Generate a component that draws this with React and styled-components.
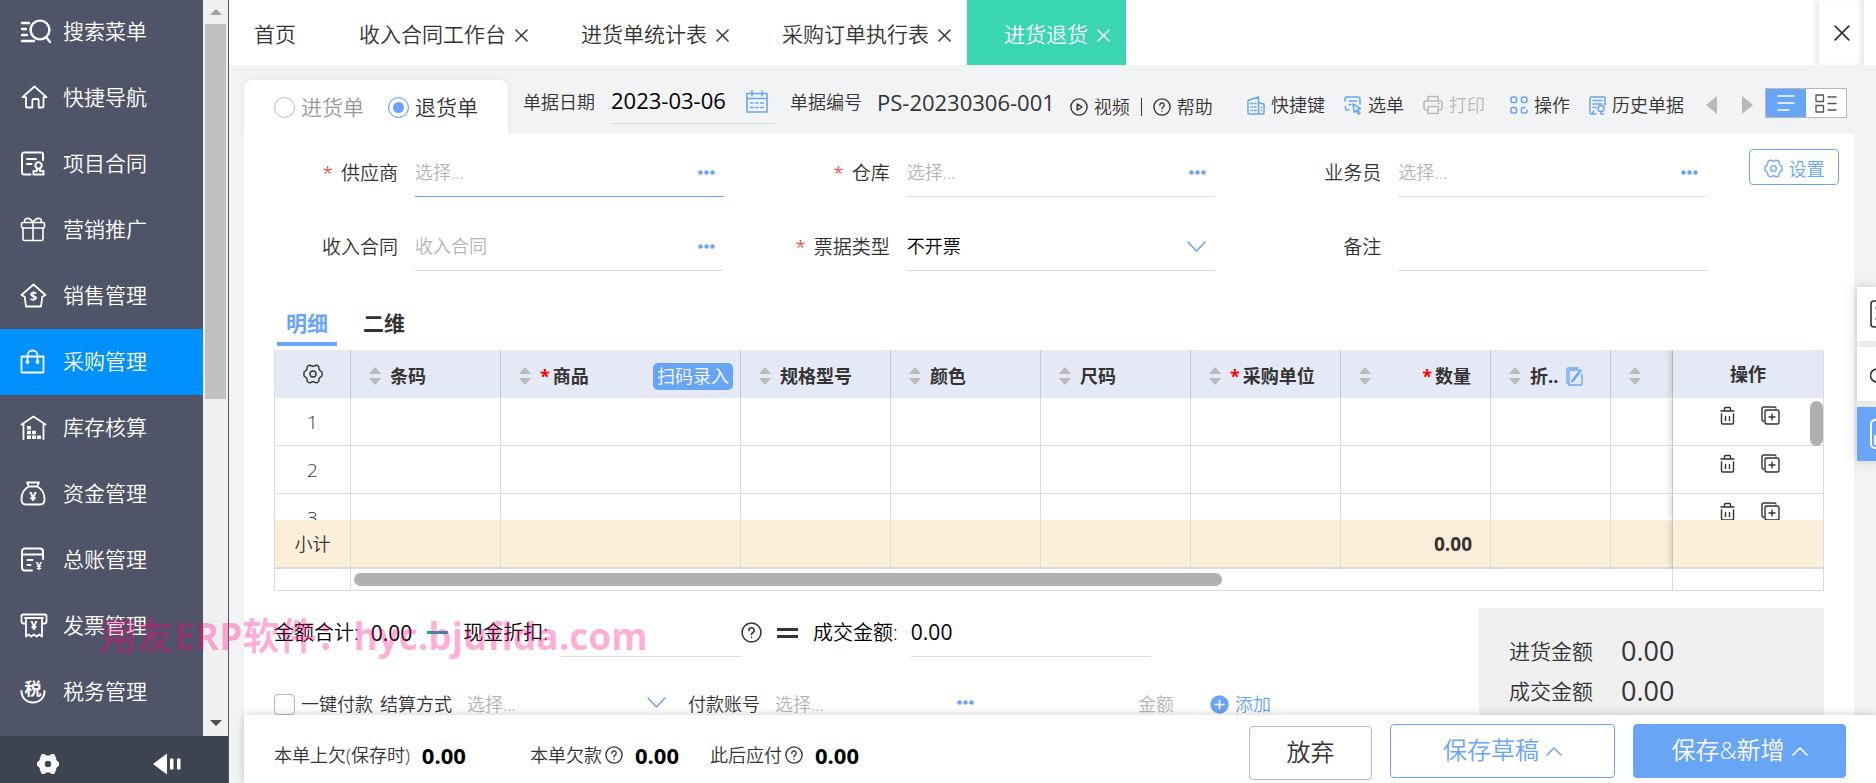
import React, { useState } from "react";
import styled, { createGlobalStyle, css } from "styled-components";

const FONT = `"Open Sans", "Noto Sans CJK SC", sans-serif`;
const BLUE = "#68a5f7";
const LINE = "#dcdcdc";

/* ---------- icons ---------- */

const Svg = ({ w = 24, h = 24, box = "0 0 24 24", sw = 1.6, children }) => (
	<svg
		width={w}
		height={h}
		viewBox={box}
		fill="none"
		stroke="currentColor"
		strokeWidth={sw}
		strokeLinecap="round"
		strokeLinejoin="round"
		aria-hidden="true"
	>
		{children}
	</svg>
);

const Glyph = ({ x, y, size, children }) => (
	<text
		x={x}
		y={y}
		fontSize={size}
		fontWeight="700"
		fontFamily='"Open Sans", "Noto Sans CJK SC", sans-serif'
		textAnchor="middle"
		fill="currentColor"
		stroke="none"
	>
		{children}
	</text>
);

const SearchMenuIcon = () => (
	<Svg w={31} h={25} box="0 0 31 25" sw={2.4}>
		<circle cx="20" cy="11" r="9.4" />
		<path d="M26 18l4 5M2 4h7M2 10h4M2 16h5M2 22h12" />
	</Svg>
);

const HomeIcon = () => (
	<Svg w={28} h={24} box="0 0 28 24" sw={1.8}>
		<path d="M2.5 12.2L14.5 1.5l12 10.7h-3v9.3a1 1 0 0 1-1 1h-3.800v-7a1.500 1.500 0 0 0-1.500-1.500h-3.400a1.500 1.500 0 0 0-1.500 1.500v7H7a1 1 0 0 1-1-1v-9.300z" />
	</Svg>
);

const ContractIcon = () => (
	<Svg w={25} h={25} box="0 0 25 25" sw={2}>
		<path d="M10.500 23.500H4a2 2 0 0 1-2-2V3.500a2 2 0 0 1 2-2h17a2 2 0 0 1 2 2V9M7 8h9M7 13h4.500" />
		<circle cx="18.500" cy="14.500" r="3.200" />
		<path d="M17 17.500v2.500h-3.500v3.500h10V20H20v-2.500" />
	</Svg>
);

const GiftIcon = () => (
	<Svg w={26} h={25} box="0 0 26 25" sw={1.6}>
		<rect x="1.500" y="5.500" width="23" height="5.500" rx="1.500" />
		<path d="M3 11v11a1.500 1.500 0 0 0 1.500 1.500h17A1.500 1.500 0 0 0 23 22V11M13 5.500v18" />
		<path d="M13 5.500C11 2 8.500 1 6.500 1.500S4 4 5.500 5.500M13 5.500C15 2 17.500 1 19.500 1.500S22 4 20.500 5.500" />
	</Svg>
);

const SalesIcon = () => (
	<Svg w={27} h={25} box="0 0 27 25" sw={1.8}>
		<path d="M1.500 12L13.500 1.500l12 10.500-3.200 1.800-1.300 9.700H6l-1.300-9.700z" />
		<Glyph x={13.5} y={18} size={13}>$</Glyph>
	</Svg>
);

const BagIcon = () => (
	<Svg w={25} h={25} box="0 0 25 25" sw={1.8}>
		<rect x="1.500" y="7.500" width="22" height="16" rx="0.500" />
		<path d="M7.500 13V6.500a5 5 0 0 1 10 0V13" />
		<circle cx="7.500" cy="13" r="1" fill="currentColor" />
		<circle cx="17.500" cy="13" r="1" fill="currentColor" />
	</Svg>
);

const StockIcon = () => (
	<Svg w={27} h={25} box="0 0 27 25" sw={1.8}>
		<path d="M1.500 9.500L13.500 1.500l12 8M3.500 9v15M23.500 9v15" />
		<path
			strokeWidth="0"
			fill="currentColor"
			d="M7 11h4v3.500H7zM7 15.700h4v3.500H7zM12 15.700h4v3.500h-4zM7 20.500h4V24H7zM12 20.500h4V24h-4zM17 20.500h4V24h-4z"
		/>
	</Svg>
);

const MoneyIcon = () => (
	<Svg w={26} h={25} box="0 0 26 25" sw={1.8}>
		<path d="M7 1.500h12l-1.800 4H8.800zM8.800 5.500C4 8 1.500 13 1.500 18c0 3.500 1.500 5.500 4 5.500h15c2.500 0 4-2 4-5.500 0-5-2.500-10-7.300-12.500" />
		<Glyph x={13} y={20} size={13}>¥</Glyph>
	</Svg>
);

const LedgerIcon = () => (
	<Svg w={25} h={25} box="0 0 25 25" sw={2}>
		<path d="M12 23.500H5a3 3 0 0 1-3-3v-16a3 3 0 0 1 3-3h15a3 3 0 0 1 3 3V12M2 7.500h21M7.500 13h5M7.500 18h3" />
		<Glyph x={19} y={23} size={11}>¥</Glyph>
	</Svg>
);

const InvoiceIcon = () => (
	<Svg w={28} h={25} box="0 0 28 25" sw={1.8}>
		<path d="M5 10.500H3.500A2 2 0 0 1 1.500 8.500V3a1.500 1.500 0 0 1 1.500-1.500h22A1.500 1.500 0 0 1 26.500 3v5.500a2 2 0 0 1-2 2H23M5 5h18M6 5v18.500l2.700-2 2.600 2 2.700-2 2.700 2 2.600-2 2.700 2V5" />
		<Glyph x={14} y={17} size={12}>¥</Glyph>
	</Svg>
);

const TaxIcon = () => (
	<Svg w={26} h={26} box="0 0 26 26" sw={2}>
		<Glyph x={13} y={17} size={17}>税</Glyph>
		<path d="M1.500 13c0 7 5 11.500 11.500 11.500S24.500 20 24.500 13" />
	</Svg>
);

const SolidGearIcon = () => (
	<svg width="22" height="22" viewBox="0 0 22 22" aria-hidden="true">
		<path
			fill="currentColor"
			fillRule="evenodd"
			stroke="currentColor"
			strokeLinejoin="round"
			d="M5 1.500h2.500L9.500 3h3l2-1.500H17L18.500 5l.5 2.500 2.500 2v3l-2.500 2-.5 2.500-1.500 3.500h-2.500l-2-1.500h-3l-2 1.500H5L3.500 17 3 14.500l-2.500-2v-3l2.500-2L3.500 5zM11 7.200a3.800 3.800 0 1 0 0 7.600 3.800 3.800 0 0 0 0-7.600z"
		/>
	</svg>
);

const CollapseIcon = () => (
	<svg width="28" height="22" viewBox="0 0 28 22" fill="currentColor" aria-hidden="true">
		<path d="M0 11L14 .5v21zM17 5.500h3.500v11H17zM24 5.500h3.500v11H24z" />
	</svg>
);

const CrossIcon = ({ size = 13 }) => (
	<Svg w={size} h={size} box="0 0 14 14" sw={1.5}>
		<path d="M1 1l12 12M13 1L1 13" />
	</Svg>
);

const CalendarIcon = () => (
	<Svg w={22} h={23} box="0 0 22 23" sw={1.6}>
		<path d="M1 3.500h20V22H1zM1 8.500h20M6 .8v5M16 .8v5" />
		<path d="M4.500 13h13M4.500 17.500h13" strokeDasharray="2.5 2.6" />
	</Svg>
);

const PlayIcon = () => (
	<Svg w={18} h={18} box="0 0 20 20" sw={1.5}>
		<circle cx="10" cy="10" r="9" />
		<path d="M8 6.500v7l5.500-3.500z" />
	</Svg>
);

const HelpIcon = ({ size = 18 }) => (
	<Svg w={size} h={size} box="0 0 20 20" sw={1.5}>
		<circle cx="10" cy="10" r="9" />
		<path d="M7.500 8a2.500 2.500 0 1 1 3.700 2.200c-.8.4-1.200.9-1.200 1.800M10 14.500v.3" />
	</Svg>
);

const BuildingIcon = () => (
	<Svg w={18} h={19} box="0 0 18 19" sw={1.5}>
		<path d="M1 17V4.500L11.500 1v17H2a1 1 0 0 1-1-1zM11.500 6.500l5.500 1.700V17a1 1 0 0 1-1 1h-4.500" />
		<path d="M4 7.500h5M4 11h5M4 14.500h5M14 11.500h.5M14 14.500h.5" strokeDasharray="1.5 2" />
	</Svg>
);

const PickIcon = () => (
	<Svg w={18} h={19} box="0 0 18 19" sw={1.5}>
		<path d="M5 14H3.500A2 2 0 0 1 1.500 12v-1.500M1 5V3a2 2 0 0 1 2-2h11a2 2 0 0 1 2 2v5M5 5h8M5 8.500h2" />
		<path d="M9 8l1.200 8.500 1.900-2 2.400 3.700 1.500-1-2.300-3.600 2.800-.9z" />
	</Svg>
);

const PrintIcon = () => (
	<Svg w={20} h={20} box="0 0 20 20" sw={1.6}>
		<path d="M5 6V1.500h10V6M5 15H3a2 2 0 0 1-2-2V8a2 2 0 0 1 2-2h14a2 2 0 0 1 2 2v5a2 2 0 0 1-2 2h-2M5 11.500h10v7H5zM15 8.500h1" />
	</Svg>
);

const GridIcon = () => (
	<Svg w={18} h={18} box="0 0 18 18" sw={1.6}>
		<rect x="1" y="1" width="5.500" height="5.500" rx="1.500" />
		<rect x="11.500" y="1" width="5.500" height="5.500" rx="2" />
		<rect x="1" y="11.500" width="5.500" height="5.500" rx="1.500" />
		<path d="M17 14v1.500a1.500 1.500 0 0 1-1.500 1.500H13a1.500 1.500 0 0 1-1.500-1.500V13a1.500 1.500 0 0 1 1.500-1.500h2" />
	</Svg>
);

const HistoryIcon = () => (
	<Svg w={17} h={19} box="0 0 17 19" sw={1.5}>
		<path d="M7 18H2a1 1 0 0 1-1-1V2a1 1 0 0 1 1-1h13a1 1 0 0 1 1 1v7M4 4.500h9M4 8h9M4 11.500h3M3 18l1.500-3" />
		<circle cx="12" cy="12.500" r="3" />
		<path d="M12 15.500V18h2.500" />
	</Svg>
);

const GearIcon = ({ size = 19 }) => (
	<Svg w={size} h={size} box="0 0 20 20" sw={1.4}>
		<path d="M5.500 1.500l2-.3L9 2.300h2l1.500-1.100 2 .3 1.200 1 .3 2.500 1 1.500 2 1.500v4l-2 1.500-1 1.500-.3 2.500-1.200 1-2 .3-1.500-1.100H9l-1.500 1.100-2-.3-1.200-1L4 15l-1-1.500L1 12V8l2-1.500L4 5l.3-2.500z" />
		<circle cx="10" cy="10" r="3" />
	</Svg>
);

const DotsIcon = () => (
	<svg width="17" height="5" viewBox="0 0 17 5" fill="currentColor" aria-hidden="true">
		<circle cx="2.500" cy="2.500" r="2.200" />
		<circle cx="8.500" cy="2.500" r="2.200" />
		<circle cx="14.500" cy="2.500" r="2.200" />
	</svg>
);

const DownIcon = () => (
	<Svg w={19} h={11} box="0 0 19 11" sw={1.5}>
		<path d="M1 1l8.500 9L18 1" />
	</Svg>
);

const UpIcon = () => (
	<Svg w={16} h={9} box="0 0 16 9" sw={1.6}>
		<path d="M1 8l7-7 7 7" />
	</Svg>
);

const SortIcon = () => (
	<svg width="12" height="18" viewBox="0 0 12 18" fill="#b9b9b9" aria-hidden="true">
		<path d="M6 0l6 7H0zM6 18l6-7H0z" />
	</svg>
);

const EditIcon = () => (
	<Svg w={17} h={19} box="0 0 17 19" sw={1.3}>
		<path d="M12 1H2a1 1 0 0 0-1 1v14l2 2h12a1 1 0 0 0 1-1V7M3 17V3h9" />
		<path d="M14.500 3.500l-8 10.500" strokeWidth="2.4" />
	</Svg>
);

const TrashIcon = () => (
	<Svg w={15} h={19} box="0 0 15 19" sw={1.4}>
		<path d="M1 5h13M4.500 5V2.500a1 1 0 0 1 1-1h4a1 1 0 0 1 1 1V5M1.500 8v9a1 1 0 0 0 1 1h10a1 1 0 0 0 1-1V8M5.500 10.500v4M9.500 10.500v4" />
	</Svg>
);

const CopyPlusIcon = () => (
	<Svg w={19} h={19} box="0 0 19 19" sw={1.4}>
		<rect x="4" y="4" width="14" height="14" rx="2" />
		<path d="M2.500 15.500A2 2 0 0 1 1 13.500V3a2 2 0 0 1 2-2h10.500a2 2 0 0 1 1.500 1M11 8v6M8 11h6" />
	</Svg>
);

const AddIcon = () => (
	<svg width="19" height="19" viewBox="0 0 19 19" aria-hidden="true">
		<circle cx="9.500" cy="9.500" r="9.200" fill={BLUE} />
		<path d="M9.500 4.500v10M4.500 9.500h10" stroke="#fff" strokeWidth="1.6" />
	</svg>
);

const Triangle = ({ left }) => (
	<svg width="11" height="18" viewBox="0 0 11 18" fill="#b9b9b9" aria-hidden="true">
		<path d={left ? "M11 0v18L0 9z" : "M0 0v18l11-9z"} />
	</svg>
);

const ListViewIcon = () => (
	<Svg w={18} h={16} box="0 0 18 16" sw={1.5}>
		<path d="M1 1h16M1 8h16M1 15h11" />
	</Svg>
);

const CardViewIcon = () => (
	<Svg w={22} h={19} box="0 0 22 19" sw={1.3}>
		<path d="M1 1h7.500v6.500H1zM1 11.500h7.500V18H1zM13 3h8M13 9.500h8M13 16h8" />
	</Svg>
);

/* ---------- data ---------- */

const menus = [
	{ name: "搜索菜单", icon: <SearchMenuIcon /> },
	{ name: "快捷导航", icon: <HomeIcon /> },
	{ name: "项目合同", icon: <ContractIcon /> },
	{ name: "营销推广", icon: <GiftIcon /> },
	{ name: "销售管理", icon: <SalesIcon /> },
	{ name: "采购管理", icon: <BagIcon />, active: true },
	{ name: "库存核算", icon: <StockIcon /> },
	{ name: "资金管理", icon: <MoneyIcon /> },
	{ name: "总账管理", icon: <LedgerIcon /> },
	{ name: "发票管理", icon: <InvoiceIcon /> },
	{ name: "税务管理", icon: <TaxIcon /> },
];

const pageTabs = ["收入合同工作台", "进货单统计表", "采购订单执行表", "进货退货"];

const columns = [
	{ name: "条码", width: 150 },
	{ name: "商品", width: 240, required: true, scan: true },
	{ name: "规格型号", width: 150 },
	{ name: "颜色", width: 150 },
	{ name: "尺码", width: 150 },
	{ name: "采购单位", width: 150, required: true },
	{ name: "数量", width: 150, required: true, right: true, sum: "0.00" },
	{ name: "折..", width: 120, edit: true },
	{ name: "" },
];

/* ---------- parts ---------- */

const Sidebar = () => (
	<Side>
		<MenuArea>
			<MenuList>
				{menus.map((m) => (
					<MenuLink href="#" key={m.name} $active={m.active}>
						<MenuIcon>{m.icon}</MenuIcon>
						{m.name}
					</MenuLink>
				))}
			</MenuList>
			<ScrollTrack>
				<ScrollArrow viewBox="0 0 12 6" $color="#a3a3a3">
					<path d="M6 0l6 6H0z" />
				</ScrollArrow>
				<ScrollThumb />
				<ScrollArrow viewBox="0 0 12 6" $color="#505050">
					<path d="M0 0h12L6 6z" />
				</ScrollArrow>
			</ScrollTrack>
		</MenuArea>
		<SideFooter>
			<PlainBtn aria-label="系统设置">
				<SolidGearIcon />
			</PlainBtn>
			<PlainBtn aria-label="收起菜单">
				<CollapseIcon />
			</PlainBtn>
		</SideFooter>
	</Side>
);

const PageTabs = () => (
	<TabBar>
		<HomeTab href="#">首页</HomeTab>
		{pageTabs.map((t) => (
			<PageTab key={t} $active={t === "进货退货"}>
				<a href="#">{t}</a>
				<PlainBtn aria-label={`关闭${t}`}>
					<CrossIcon />
				</PlainBtn>
			</PageTab>
		))}
		<CloseAll aria-label="关闭全部">
			<CrossIcon size={16} />
		</CloseAll>
	</TabBar>
);

const Toolbar = () => {
	const [kind, setKind] = useState("return");
	return (
		<ToolRow>
			<KindCard>
				<KindLabel $on={kind === "in"}>
					<input
						type="radio"
						name="kind"
						checked={kind === "in"}
						onChange={() => setKind("in")}
					/>
					进货单
				</KindLabel>
				<KindLabel $on={kind === "return"}>
					<input
						type="radio"
						name="kind"
						checked={kind === "return"}
						onChange={() => setKind("return")}
					/>
					退货单
				</KindLabel>
			</KindCard>
			<DocInfo>
				<label htmlFor="billDate">单据日期</label>
				<DateBox>
					<input id="billDate" defaultValue="2023-03-06" />
					<CalendarIcon />
				</DateBox>
				<span>单据编号</span>
				<DocNo>PS-20230306-001</DocNo>
			</DocInfo>
			<HelpLinks>
				<a href="#">
					<PlayIcon />
					视频
				</a>
				<i />
				<a href="#">
					<HelpIcon />
					帮助
				</a>
			</HelpLinks>
			<Actions>
				<ActionBtn>
					<BuildingIcon />
					快捷键
				</ActionBtn>
				<ActionBtn>
					<PickIcon />
					选单
				</ActionBtn>
				<ActionBtn disabled>
					<PrintIcon />
					打印
				</ActionBtn>
				<ActionBtn>
					<GridIcon />
					操作
				</ActionBtn>
				<ActionBtn>
					<HistoryIcon />
					历史单据
				</ActionBtn>
			</Actions>
			<Pager>
				<PlainBtn aria-label="上一单">
					<Triangle left />
				</PlainBtn>
				<PlainBtn aria-label="下一单">
					<Triangle />
				</PlainBtn>
			</Pager>
			<ViewToggle>
				<ViewBtn $active aria-label="列表视图">
					<ListViewIcon />
				</ViewBtn>
				<ViewBtn aria-label="卡片视图">
					<CardViewIcon />
				</ViewBtn>
			</ViewToggle>
		</ToolRow>
	);
};

const Field = ({ id, label, required, focus, type = "pick", placeholder }) => (
	<FieldRow>
		<FieldLabel htmlFor={id}>
			{required && <Star>*</Star>}
			{label}
		</FieldLabel>
		<FieldBox $focus={focus}>
			{type === "select" ? (
				<select id={id} defaultValue="none">
					<option value="none">不开票</option>
				</select>
			) : (
				<input id={id} placeholder={placeholder} />
			)}
			{type === "pick" && (
				<PickBtn aria-label={`选择${label}`}>
					<DotsIcon />
				</PickBtn>
			)}
			{type === "select" && <DownIcon />}
		</FieldBox>
	</FieldRow>
);

const DetailTable = () => (
	<TableBox>
		<Table>
			<colgroup>
				<col width="76" />
				{columns.map((c) => (
					<col key={c.name} width={c.width} />
				))}
				<col width="150" />
			</colgroup>
			<thead>
				<tr>
					<NumHead>
						<PlainBtn aria-label="列设置">
							<GearIcon size={20} />
						</PlainBtn>
					</NumHead>
					{columns.map((c) => (
						<th key={c.name}>
							<HeadCell>
								<SortIcon />
								<HeadText $right={c.right}>
									{c.required && <Star $tight>*</Star>}
									{c.name}
								</HeadText>
								{c.scan && <ScanBtn>扫码录入</ScanBtn>}
								{c.edit && (
									<EditBtn aria-label="批量修改折扣">
										<EditIcon />
									</EditBtn>
								)}
							</HeadCell>
						</th>
					))}
					<OpHead>操作</OpHead>
				</tr>
			</thead>
			<tbody>
				{[1, 2, 3].map((n) => (
					<tr key={n}>
						<td>
							<RowNo $cut={n === 3}>{n}</RowNo>
						</td>
						{columns.map((c) => (
							<td key={c.name} />
						))}
						<OpCell>
							<OpIcons $cut={n === 3}>
								<PlainBtn aria-label="删除行">
									<TrashIcon />
								</PlainBtn>
								<PlainBtn aria-label="复制行">
									<CopyPlusIcon />
								</PlainBtn>
							</OpIcons>
						</OpCell>
					</tr>
				))}
			</tbody>
			<tfoot>
				<tr>
					<td>小计</td>
					{columns.map((c) => (
						<SumCell key={c.name}>{c.sum}</SumCell>
					))}
					<OpCell />
				</tr>
			</tfoot>
		</Table>
		<RowThumb />
		<ScrollRow>
			<i />
			<div>
				<ColThumb />
			</div>
			<i />
		</ScrollRow>
	</TableBox>
);

const Totals = () => (
	<Bottom>
		<div>
			<SumRow>
				<span>金额合计:</span>
				<b>0.00</b>
				<Minus />
				<label htmlFor="cashOff">现金折扣:</label>
				<SumInput id="cashOff" $width={180} />
				<HelpIcon size={21} />
				<Equal />
				<label htmlFor="deal">成交金额:</label>
				<SumInput id="deal" $width={240} defaultValue="0.00" />
			</SumRow>
			<PayRow>
				<Tick>
					<input type="checkbox" />
					一键付款
				</Tick>
				<label htmlFor="payWay">结算方式</label>
				<PayBox>
					<select id="payWay" defaultValue="">
						<option value="">选择...</option>
					</select>
					<DownIcon />
				</PayBox>
				<label htmlFor="payAcc">付款账号</label>
				<PayBox>
					<input id="payAcc" placeholder="选择..." />
					<PickBtn aria-label="选择付款账号">
						<DotsIcon />
					</PickBtn>
				</PayBox>
				<PayAmount aria-label="金额" placeholder="金额" />
				<AddBtn>
					<AddIcon />
					添加
				</AddBtn>
			</PayRow>
		</div>
		<Summary>
			<div>
				<dt>进货金额</dt>
				<dd>0.00</dd>
			</div>
			<div>
				<dt>成交金额</dt>
				<dd>0.00</dd>
			</div>
		</Summary>
	</Bottom>
);

const Footer = () => (
	<FootBar>
		<Owe>
			本单上欠(保存时)<b>0.00</b>
		</Owe>
		<Owe>
			本单欠款
			<HelpIcon />
			<b>0.00</b>
		</Owe>
		<Owe>
			此后应付
			<HelpIcon />
			<b>0.00</b>
		</Owe>
		<FootBtns>
			<FootBtn $width={123}>放弃</FootBtn>
			<FootBtn $width={225} $kind="outline">
				保存草稿
				<UpIcon />
			</FootBtn>
			<FootBtn $width={213} $kind="primary">
				保存&新增
				<UpIcon />
			</FootBtn>
		</FootBtns>
	</FootBar>
);

const App = () => (
	<>
		<GlobalStyle />
		<Page>
			<Sidebar />
			<Main>
				<PageTabs />
				<Toolbar />
				<Card>
					<FormArea>
						<FieldGrid>
							<Field id="supplier" label="供应商" required focus placeholder="选择..." />
							<Field id="store" label="仓库" required placeholder="选择..." />
							<Field id="staff" label="业务员" placeholder="选择..." />
							<Field id="contract" label="收入合同" placeholder="收入合同" />
							<Field id="invoice" label="票据类型" required type="select" />
							<Field id="memo" label="备注" type="text" />
						</FieldGrid>
						<SetBtn>
							<GearIcon />
							设置
						</SetBtn>
					</FormArea>
					<DetailTabs>
						<DetailTab $active>明细</DetailTab>
						<DetailTab>二维</DetailTab>
					</DetailTabs>
					<DetailTable />
					<Totals />
				</Card>
				<Footer />
			</Main>
			<FloatTools>
				<FloatBtn aria-label="便签">
					<Svg w={26} h={28} box="0 0 26 28">
						<rect x="1" y="1" width="24" height="26" rx="3" />
						<path d="M6 8h14M6 19h14" />
					</Svg>
				</FloatBtn>
				<FloatBtn aria-label="客服">
					<Svg w={26} h={28} box="0 0 26 28">
						<path d="M7 22a6 6 0 0 1 0-13 8 8 0 0 1 15 3" />
					</Svg>
				</FloatBtn>
				<FloatBtn $active aria-label="报表">
					<Svg w={28} h={30} box="0 0 28 30" sw={2}>
						<rect x="1" y="1" width="26" height="28" rx="4" />
						<path d="M5 17v8h16M8 21l4-5" />
					</Svg>
				</FloatBtn>
			</FloatTools>
			<Watermark>用友ERP软件：hyc.bjufida.com</Watermark>
		</Page>
	</>
);

export default App;

/* ---------- styles ---------- */

const GlobalStyle = createGlobalStyle`
	* {
		box-sizing: border-box;
	}
	body {
		margin: 0;
		font-family: ${FONT};
		font-size: 18px;
		font-weight: 350;
		line-height: 24px;
		color: #333;
	}
	button, input, select {
		font: inherit;
		color: inherit;
		margin: 0;
	}
	input, select {
		border: none;
		background: transparent;
		outline: none;
		padding: 0;
		min-width: 0;
	}
	select {
		appearance: none;
	}
	input::placeholder {
		color: #b5b5b5;
		opacity: 1;
	}
	button {
		cursor: pointer;
	}
	a {
		color: inherit;
		text-decoration: none;
	}
	svg {
		display: block;
		flex: none;
	}
`;

const Page = styled.div`
	position: relative;
	display: flex;
	height: 100vh;
	overflow: hidden;
	background: #f2f3f5;
`;

const PlainBtn = styled.button`
	display: flex;
	align-items: center;
	border: none;
	background: none;
	padding: 0;
`;

const Side = styled.nav`
	width: 229px;
	flex: none;
	display: flex;
	flex-direction: column;
	background: #4f5468;
	border-right: 1px solid #4f5468;
	color: #fff;
`;

const MenuArea = styled.div`
	flex: 1;
	min-height: 0;
	display: flex;
`;

const MenuList = styled.div`
	flex: 1;
	display: flex;
	flex-direction: column;
	margin-top: -1px;
	overflow: hidden;
`;

const MenuLink = styled.a`
	height: 66px;
	flex: none;
	display: flex;
	align-items: center;
	padding: 0 0 2px 20px;
	font-size: 21px;
	background: ${(p) => (p.$active ? "#0091ff" : "transparent")};
`;

const MenuIcon = styled.span`
	width: 43px;
`;

const ScrollTrack = styled.div`
	width: 25px;
	display: flex;
	flex-direction: column;
	align-items: center;
	padding: 9px 0 10px;
	background: #f0f0f0;
`;

const ScrollArrow = styled.svg`
	width: 12px;
	height: 6px;
	fill: ${(p) => p.$color};
`;

const ScrollThumb = styled.div`
	width: 21px;
	height: 375px;
	margin: 9px 0 auto;
	background: #c1c1c1;
`;

const SideFooter = styled.div`
	height: 47px;
	display: flex;
	align-items: center;
	justify-content: space-between;
	padding: 8px 47px 0 37px;
	background: #3e4350;
`;

const Main = styled.div`
	flex: 1;
	min-width: 0;
	display: flex;
	flex-direction: column;
`;

const TabBar = styled.div`
	height: 65px;
	flex: none;
	display: flex;
	padding-right: 12px;
	background: #fff;
	font-size: 21px;
`;

const HomeTab = styled.a`
	display: flex;
	align-items: center;
	padding: 3px 26px 0 25px;
`;

const PageTab = styled.div`
	display: flex;
	align-items: center;
	gap: 9px;
	padding: 3px 16px 0 37px;
	color: ${(p) => (p.$active ? "#fff" : "#333")};
	background: ${(p) => (p.$active ? "#3ad6b3" : "transparent")};
	svg {
		margin-top: 3px;
	}
`;

const CloseAll = styled(PlainBtn)`
	width: 45px;
	margin-left: auto;
	justify-content: center;
	box-shadow: -3px 0 6px rgba(0, 0, 0, 0.1), inset -6px 0 6px -3px rgba(0, 0, 0, 0.1);
	clip-path: inset(0 0 0 -10px);
`;

const ToolRow = styled.div`
	height: 69px;
	flex: none;
	display: flex;
	align-items: flex-start;
	padding: 15px 29px 0 15px;
`;

const KindCard = styled.div`
	width: 264px;
	height: 54px;
	display: flex;
	align-items: center;
	gap: 24px;
	padding-left: 30px;
	border-radius: 8px 8px 0 0;
	background: #fff;
	box-shadow: 0 0 8px rgba(0, 0, 0, 0.06);
`;

const KindLabel = styled.label`
	display: flex;
	align-items: center;
	gap: 6px;
	font-size: 21px;
	color: ${(p) => (p.$on ? "#333" : "#999")};
	input {
		appearance: none;
		width: 21px;
		height: 21px;
		border: 1px solid ${(p) => (p.$on ? BLUE : "#bbb")};
		border-radius: 50%;
		background: ${(p) => (p.$on ? BLUE : "#fff")};
		box-shadow: inset 0 0 0 4px #fff;
	}
`;

const DocInfo = styled.div`
	display: flex;
	align-items: center;
	height: 44px;
	margin-left: 15px;
`;

const DateBox = styled.div`
	width: 164px;
	height: 44px;
	display: flex;
	align-items: center;
	justify-content: space-between;
	margin: 0 15px 0 16px;
	padding-right: 7px;
	border-bottom: 1px solid ${LINE};
	color: ${BLUE};
	input {
		width: 124px;
		padding-bottom: 3px;
		font-size: 22px;
		font-weight: 400;
		color: #000;
	}
`;

const DocNo = styled.span`
	margin-left: 15px;
	font-size: 22px;
	font-weight: 400;
`;

const HelpLinks = styled.div`
	display: flex;
	align-items: center;
	gap: 11px;
	height: 54px;
	margin-left: 15px;
	a {
		display: flex;
		align-items: center;
		gap: 6px;
	}
	i {
		width: 1px;
		height: 18px;
		background: #333;
	}
`;

const Actions = styled.div`
	display: flex;
	align-items: center;
	gap: 19px;
	height: 50px;
	margin-left: auto;
`;

const ActionBtn = styled.button`
	display: flex;
	align-items: center;
	gap: 6px;
	padding: 0;
	border: none;
	background: none;
	color: #333;
	svg {
		color: ${BLUE};
	}
	&:disabled {
		color: #b9b9b9;
		margin-right: 6px;
		svg {
			color: #b9b9b9;
		}
	}
`;

const Pager = styled.div`
	display: flex;
	align-items: center;
	gap: 25px;
	height: 50px;
	margin: 0 12px 0 22px;
`;

const ViewToggle = styled.div`
	display: flex;
	margin-top: 8px;
	border: 1px solid #b9b9b9;
	background: #fff;
`;

const ViewBtn = styled(PlainBtn)`
	width: 40px;
	height: 28px;
	justify-content: center;
	color: ${(p) => (p.$active ? "#fff" : "#555")};
	background: ${(p) => (p.$active ? BLUE : "#fff")};
`;

const Card = styled.div`
	flex: 1;
	min-height: 0;
	overflow: hidden;
	margin: 0 22px 0 15px;
	background: #fff;
`;

const FormArea = styled.div`
	display: flex;
	align-items: flex-start;
	justify-content: space-between;
	padding: 15px 15px 0 0;
`;

const FieldGrid = styled.div`
	flex: 1;
	display: grid;
	grid-template-columns: repeat(3, 1fr);
	row-gap: 26px;
	padding-right: 30px;
`;

const FieldRow = styled.div`
	display: flex;
	align-items: flex-end;
	gap: 17px;
	padding-right: 12px;
`;

const FieldLabel = styled.label`
	width: 154px;
	height: 36px;
	text-align: right;
	font-size: 19px;
`;

const Star = styled.span`
	margin-right: ${(p) => (p.$tight ? "3px" : "8px")};
	color: #f00;
`;

const FieldBox = styled.div`
	flex: 1;
	min-width: 0;
	height: 48px;
	display: flex;
	align-items: center;
	padding: 0 9px 1px 0;
	border-bottom: 1px solid ${(p) => (p.$focus ? BLUE : LINE)};
	color: ${BLUE};
	input,
	select {
		flex: 1;
		color: #000;
	}
`;

const PickBtn = styled(PlainBtn)`
	color: ${BLUE};
`;

const SetBtn = styled.button`
	width: 90px;
	height: 36px;
	display: flex;
	align-items: center;
	justify-content: center;
	gap: 6px;
	padding: 3px 0 0;
	border: 1px solid ${BLUE};
	border-radius: 4px;
	background: #fff;
	color: ${BLUE};
`;

const DetailTabs = styled.div`
	display: flex;
	gap: 17px;
	padding: 35px 33px 0;
`;

const DetailTab = styled.button`
	width: 60px;
	height: 40px;
	padding: 0 0 2px;
	border: none;
	border-bottom: 4px solid ${(p) => (p.$active ? BLUE : "transparent")};
	background: none;
	font-size: 21px;
	font-weight: 700;
	color: ${(p) => (p.$active ? BLUE : "#333")};
`;

const TableBox = styled.div`
	position: relative;
	margin: 4px 30px 0;
	border: 1px solid ${LINE};
	border-top: none;
`;

const Table = styled.table`
	width: 100%;
	table-layout: fixed;
	border-collapse: separate;
	border-spacing: 0;
	th,
	td {
		padding: 0;
		border-right: 1px solid ${LINE};
	}
	th:last-child,
	td:last-child {
		border-right: none;
	}
	th {
		height: 48px;
		background: #e5e9f5;
		border-color: #c8c8c8;
	}
	tbody td {
		border-bottom: 1px solid ${LINE};
	}
	tbody tr:last-child td {
		border-bottom: none;
	}
	tfoot td {
		height: 49px;
		text-align: center;
		background: #fcefda;
		border-bottom: 2px solid ${LINE};
	}
`;

const NumHead = styled.th`
	button {
		margin: 0 auto;
	}
`;

const HeadCell = styled.div`
	display: flex;
	align-items: center;
	padding: 4px 7px 0 18px;
`;

const HeadText = styled.span`
	margin-left: 9px;
	font-weight: 700;
	white-space: nowrap;
	${(p) =>
		p.$right &&
		css`
			margin-left: auto;
			margin-right: 12px;
		`}
`;

const ScanBtn = styled.button`
	height: 27px;
	margin-left: auto;
	padding: 0 4px;
	border: none;
	border-radius: 5px;
	background: ${BLUE};
	color: #fff;
	font-weight: 350;
`;

const EditBtn = styled(PlainBtn)`
	margin-left: 8px;
	color: ${BLUE};
`;

const opShadow = css`
	position: relative;
	box-shadow: -3px 0 6px rgba(0, 0, 0, 0.14);
	clip-path: inset(0 0 0 -9px);
`;

const OpHead = styled.th`
	${opShadow}
	font-weight: 700;
`;

const OpCell = styled.td`
	${opShadow}
`;

const RowNo = styled.div`
	height: ${(p) => (p.$cut ? "26px" : "47px")};
	padding-top: 12px;
	overflow: hidden;
	text-align: center;
	font-size: 19px;
`;

const OpIcons = styled.div`
	height: ${(p) => (p.$cut ? "26px" : "47px")};
	overflow: hidden;
	display: flex;
	align-items: flex-start;
	gap: 26px;
	padding: 8px 0 0 47px;
`;

const SumCell = styled.td`
	&& {
		padding-right: 18px;
		text-align: right;
		font-size: 19px;
		font-weight: 700;
	}
`;

const ScrollRow = styled.div`
	height: 21px;
	display: grid;
	grid-template-columns: 76px 1fr 150px;
	i,
	div {
		border-right: 1px solid ${LINE};
	}
	i:last-child {
		border: none;
	}
	div {
		padding: 4px 3px;
	}
`;

const ColThumb = styled.span`
	display: block;
	width: 66%;
	height: 13px;
	border-radius: 7px;
	background: #b0b0b0;
`;

const RowThumb = styled.span`
	position: absolute;
	top: 51px;
	right: 0;
	width: 13px;
	height: 45px;
	border-radius: 7px;
	background: #b0b0b0;
`;

const Bottom = styled.div`
	display: flex;
	justify-content: space-between;
	padding: 17px 30px 0;
`;

const SumRow = styled.div`
	height: 49px;
	display: flex;
	align-items: center;
	font-size: 20px;
	color: #000;
	svg {
		color: #333;
	}
	b {
		margin-left: 12px;
		font-size: 21px;
		font-weight: 400;
	}
`;

const Minus = styled.i`
	width: 21px;
	height: 3px;
	margin: 0 15px;
	background: #00b5ad;
`;

const Equal = styled.i`
	width: 21px;
	height: 10px;
	margin: 0 15px;
	border: solid #333;
	border-width: 3px 0;
`;

const SumInput = styled.input`
	width: ${(p) => p.$width}px;
	height: 49px;
	margin-left: 13px;
	border-bottom: 1px solid ${LINE};
	font-size: 21px;
	font-weight: 400;
`;

const PayRow = styled.div`
	height: 48px;
	display: flex;
	align-items: center;
	margin-top: 23px;
`;

const Tick = styled.label`
	display: flex;
	align-items: center;
	gap: 6px;
	margin-right: 7px;
	input {
		appearance: none;
		width: 21px;
		height: 21px;
		border: 1px solid #b5b5b5;
		border-radius: 4px;
	}
`;

const PayBox = styled.div`
	width: 199px;
	display: flex;
	align-items: center;
	margin: 0 22px 0 15px;
	color: ${BLUE};
	input,
	select {
		flex: 1;
		color: #b5b5b5;
	}
	svg {
		margin-bottom: 4px;
	}
`;

const PayAmount = styled.input`
	width: 100px;
	margin: 0 36px 0 78px;
	text-align: right;
`;

const AddBtn = styled(PlainBtn)`
	gap: 6px;
	color: ${BLUE};
`;

const Summary = styled.dl`
	width: 345px;
	height: 200px;
	margin: 0;
	padding: 23px 30px;
	background: #f0f0f0;
	div {
		height: 40px;
		display: flex;
		align-items: center;
	}
	dt {
		font-size: 21px;
	}
	dd {
		margin-left: 28px;
		font-size: 27px;
		font-weight: 400;
	}
`;

const FootBar = styled.footer`
	position: relative;
	height: 68px;
	flex: none;
	display: flex;
	align-items: flex-start;
	margin-left: 15px;
	padding: 9px 30px 0;
	background: #fff;
	box-shadow: 0 0 9px rgba(0, 0, 0, 0.2);
`;

const Owe = styled.span`
	height: 62px;
	min-width: 180px;
	display: flex;
	align-items: center;
	gap: 3px;
	&:first-child {
		width: 256px;
	}
	b {
		margin-left: 9px;
		font-size: 22px;
		font-weight: 700;
		color: #000;
	}
`;

const FootBtns = styled.div`
	display: flex;
	gap: 18px;
	margin-left: auto;
`;

const FootBtn = styled.button`
	width: ${(p) => p.$width}px;
	height: 54px;
	display: flex;
	align-items: center;
	justify-content: center;
	gap: 7px;
	padding: 0 0 2px;
	border: 1px solid #b9b9b9;
	border-radius: 4px;
	background: #fff;
	font-size: 24px;
	&:first-child {
		margin-top: 2px;
	}
	svg {
		margin-top: 3px;
	}
	${(p) =>
		p.$kind === "outline" &&
		css`
			border-color: ${BLUE};
			color: ${BLUE};
		`}
	${(p) =>
		p.$kind === "primary" &&
		css`
			border-color: ${BLUE};
			background: ${BLUE};
			color: #fff;
		`}
`;

const FloatTools = styled.aside`
	position: absolute;
	top: 287px;
	right: 0;
	width: 19px;
	display: flex;
	flex-direction: column;
	gap: 6px;
	box-shadow: 0 0 18px rgba(0, 0, 0, 0.12);
`;

const FloatBtn = styled(PlainBtn)`
	height: 54px;
	padding-left: 13px;
	overflow: hidden;
	color: ${(p) => (p.$active ? "#fff" : "#333")};
	background: ${(p) => (p.$active ? BLUE : "#fff")};
	box-shadow: 0 0 6px rgba(0, 0, 0, 0.1);
`;

const Watermark = styled.div`
	position: absolute;
	top: 612px;
	left: 100px;
	pointer-events: none;
	white-space: nowrap;
	font-size: 37px;
	font-weight: 700;
	line-height: 48px;
	color: rgba(255, 0, 129, 0.33);
`;
